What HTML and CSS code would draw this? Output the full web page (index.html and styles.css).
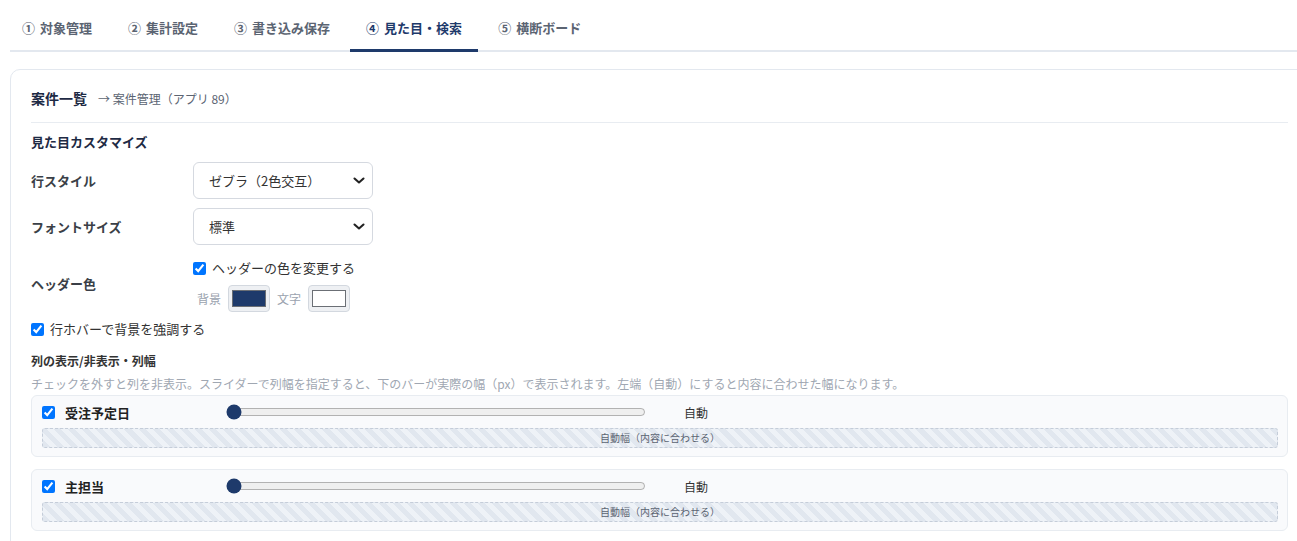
FILE: index.html
```html
<!DOCTYPE html>
<html lang="ja">
<head>
<meta charset="utf-8">
<title>見た目・検索</title>
<link rel="stylesheet" href="styles.css">
</head>
<body>
<div class="page">
  <nav class="tabs">
    <div class="tab"><span class="num">①</span>対象管理</div>
    <div class="tab"><span class="num">②</span>集計設定</div>
    <div class="tab"><span class="num">③</span>書き込み保存</div>
    <div class="tab active"><span class="num">④</span>見た目・検索</div>
    <div class="tab"><span class="num">⑤</span>横断ボード</div>
  </nav>

  <section class="card">
    <header class="card-head">
      <span class="card-title">案件一覧</span>
      <span class="card-sub">→ 案件管理（アプリ 89）</span>
    </header>

    <h3 class="sec-title">見た目カスタマイズ</h3>

    <div class="form-grid">
      <div class="f-label">行スタイル</div>
      <div class="select">
        <span>ゼブラ（2色交互）</span>
        <svg class="chev" width="14" height="9" viewBox="0 0 14 9"><path d="M2.5 2.5 L7 6.5 L11.5 2.5" fill="none" stroke="#222" stroke-width="2.1" stroke-linecap="round" stroke-linejoin="round"/></svg>
      </div>

      <div class="f-label">フォントサイズ</div>
      <div class="select">
        <span>標準</span>
        <svg class="chev" width="14" height="9" viewBox="0 0 14 9"><path d="M2.5 2.5 L7 6.5 L11.5 2.5" fill="none" stroke="#222" stroke-width="2.1" stroke-linecap="round" stroke-linejoin="round"/></svg>
      </div>

      <div class="f-label">ヘッダー色</div>
      <div class="hc-block">
        <label class="check-line"><input type="checkbox" checked> ヘッダーの色を変更する</label>
        <div class="swatch-row">
          <span class="sw-label">背景</span>
          <span class="swatch"><span class="sw-inner navy"></span></span>
          <span class="sw-label">文字</span>
          <span class="swatch"><span class="sw-inner white"></span></span>
        </div>
      </div>
    </div>

    <label class="check-line hover-line"><input type="checkbox" checked> 行ホバーで背景を強調する</label>

    <h4 class="col-title">列の表示/非表示・列幅</h4>
    <p class="desc">チェックを外すと列を非表示。スライダーで列幅を指定すると、下のバーが実際の幅（px）で表示されます。左端（自動）にすると内容に合わせた幅になります。</p>

    <div class="col-row">
      <div class="col-top">
        <input type="checkbox" checked>
        <span class="col-name">受注予定日</span>
        <input class="range" type="range" min="0" max="100" value="0">
        <span class="col-val">自動</span>
      </div>
      <div class="bar">自動幅（内容に合わせる）</div>
    </div>

    <div class="col-row">
      <div class="col-top">
        <input type="checkbox" checked>
        <span class="col-name">主担当</span>
        <input class="range" type="range" min="0" max="100" value="0">
        <span class="col-val">自動</span>
      </div>
      <div class="bar">自動幅（内容に合わせる）</div>
    </div>
  </section>
</div>
</body>
</html>
```
FILE: styles.css
```css
html, body {
  margin: 0;
  padding: 0;
  overflow: hidden;
  background: #fff;
}
body {
  font-family: "Noto Sans CJK JP", "Noto Sans", sans-serif;
  color: #333;
}
.page {
  padding-left: 10px;
  padding-top: 8px;
}
.tabs {
  display: flex;
  gap: 4px;
  width: 1300px;
  border-bottom: 2px solid #e3e8ef;
}
.tab {
  font-size: 13px;
  font-weight: 700;
  color: #5b6472;
  padding: 10px 16px 11px;
  line-height: 20px;
  border-bottom: 3px solid transparent;
  margin-bottom: -2px;
}
.tab:first-child {
  padding-left: 12px;
}
.num {
  margin-right: 5px;
}
.tab.active {
  color: #1e3a6b;
  border-bottom-color: #1e3a6b;
}
.card {
  margin-top: 17px;
  width: 1299px;
  box-sizing: border-box;
  border: 1px solid #e3e8ef;
  border-radius: 10px;
  padding: 19px 20px 20px;
}
.card-head {
  display: flex;
  align-items: baseline;
  gap: 11px;
  padding-bottom: 15px;
  border-bottom: 1px solid #e8ecf1;
}
.card-title {
  font-size: 14px;
  font-weight: 700;
  color: #1e2a44;
  line-height: 18px;
}
.card-sub {
  font-size: 12px;
  color: #5b6472;
}
.sec-title {
  margin: 10px 0 0;
  font-size: 13px;
  font-weight: 700;
  line-height: 18px;
  color: #1e2a44;
}
.form-grid {
  margin-top: 11px;
  display: grid;
  grid-template-columns: 162px auto;
  row-gap: 9px;
  align-items: center;
}
.f-label {
  font-size: 13px;
  font-weight: 700;
  color: #3a3f47;
}
.select {
  width: 180px;
  height: 37px;
  box-sizing: border-box;
  border: 1px solid #d5d9e0;
  border-radius: 6px;
  display: flex;
  align-items: center;
  justify-content: space-between;
  padding: 0 6px 0 15px;
  font-size: 13px;
  color: #333;
}
.chev {
  display: block;
}
.hc-block {
  padding-top: 4px;
  display: flex;
  flex-direction: column;
  gap: 7px;
}
.check-line {
  display: flex;
  align-items: center;
  gap: 6px;
  font-size: 13px;
  line-height: 20px;
  color: #333;
}
.check-line input, .col-top input[type="checkbox"] {
  margin: 0;
  width: 13px;
  height: 13px;
}
.swatch-row {
  display: flex;
  align-items: center;
  gap: 7px;
  padding-left: 4px;
}
.sw-label {
  font-size: 12px;
  color: #9aa2ae;
}
.swatch {
  width: 42px;
  height: 27px;
  box-sizing: border-box;
  border: 1px solid #d3d8df;
  border-radius: 4px;
  background: #eef0f3;
  display: flex;
  align-items: center;
  justify-content: center;
}
.sw-inner {
  width: 34px;
  height: 17px;
  box-sizing: border-box;
  border: 1px solid #6b6f75;
}
.sw-inner.navy { background: #1e3a6b; }
.sw-inner.white { background: #fff; }
.hover-line {
  margin-top: 7px;
}
.col-title {
  margin: 13px 0 0;
  font-size: 12px;
  font-weight: 700;
  line-height: 18px;
  color: #333;
}
.desc {
  margin: 5px 0 0;
  font-size: 12px;
  line-height: 18px;
  color: #a0a7b2;
}
.col-row {
  margin-top: 2px;
  margin-bottom: 12px;
  border: 1px solid #e8ecf1;
  border-radius: 6px;
  background: #f9fafc;
  padding: 8px 9px 8px 10px;
}
.col-top {
  display: flex;
  align-items: center;
  height: 16px;
}
.col-name {
  margin-left: 10px;
  width: 161px;
  font-size: 13px;
  font-weight: 700;
  color: #222;
}
.range {
  margin: 0;
  width: 420px;
  height: 16px;
  accent-color: #1e3a6b;
}
.col-val {
  margin-left: 38px;
  font-size: 12px;
  color: #333;
}
.bar {
  margin-top: 8px;
  height: 20px;
  box-sizing: border-box;
  border: 1px dashed #c5cdd9;
  border-radius: 3px;
  background: repeating-linear-gradient(45deg, #e1e7ef 0 5px, #eef2f7 5px 10px);
  font-size: 10px;
  line-height: 18px;
  text-align: center;
  color: #5b6472;
}
```
